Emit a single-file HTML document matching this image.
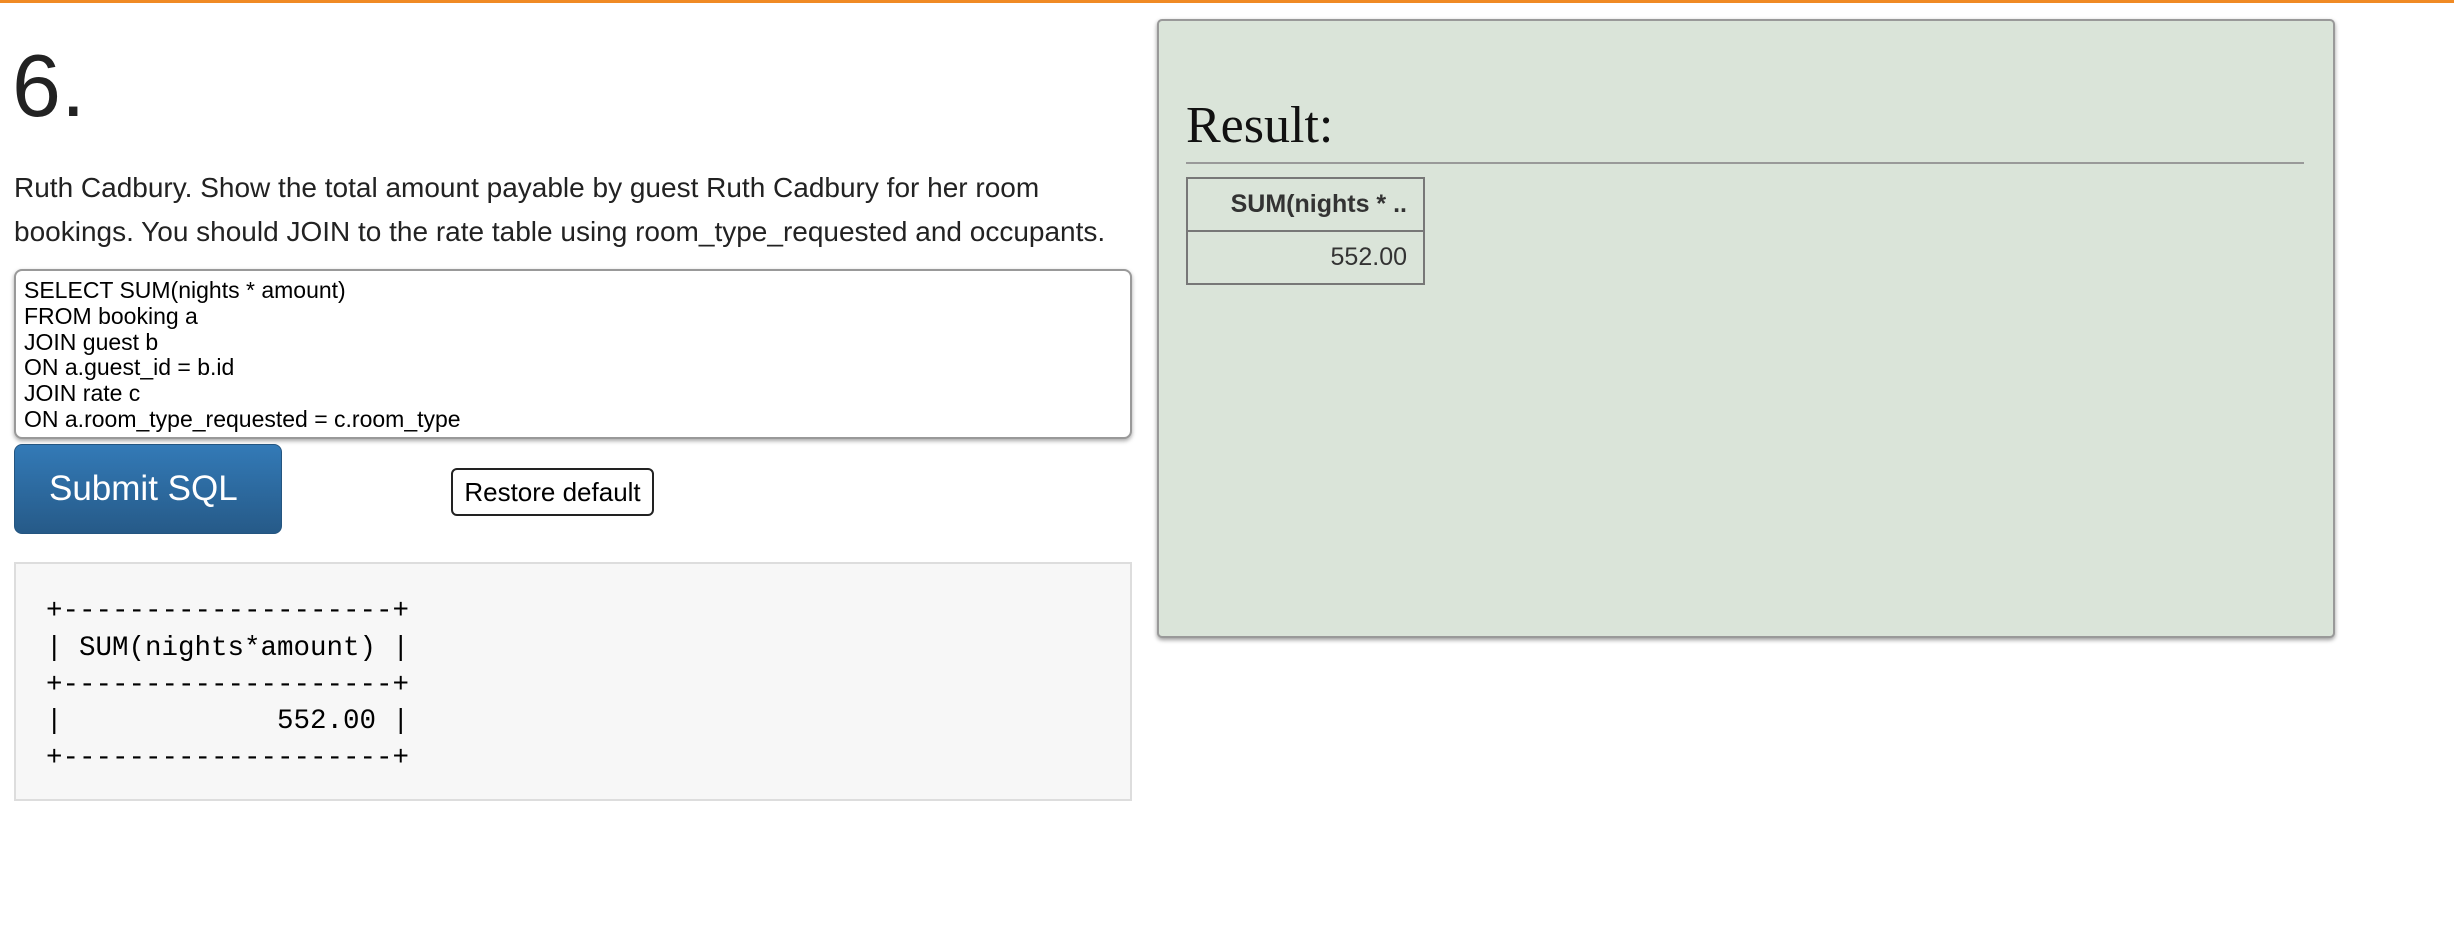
<!DOCTYPE html>
<html><head><style>
body{margin:0;width:2454px;height:934px;background:#fff;position:relative;overflow:hidden;font-family:"Liberation Sans",Arial,sans-serif;color:#222}
.top{position:absolute;left:0;top:0;width:2454px;height:3px;background:#f08a24}
.h{position:absolute;left:12px;top:36px;font-size:88px;line-height:100px;color:#222}
.p{position:absolute;left:14px;top:166px;width:1200px;font-size:28px;line-height:44px;color:#222;white-space:nowrap}
.ta{position:absolute;left:14px;top:269px;width:1118px;height:170px;border:2px solid #999;border-radius:8px;box-shadow:0 2px 4px rgba(0,0,0,.35);box-sizing:border-box;padding:7px 8px;font-size:23px;line-height:25.8px;color:#000;background:#fff;white-space:pre}
.btn{position:absolute;left:14px;top:444px;width:268px;height:90px;border-radius:8px;background:linear-gradient(#337ab7,#265a88);border:1px solid #245580;box-sizing:border-box;color:#fff;font-size:35px;line-height:88px;padding-left:34px}
.rd{position:absolute;left:451px;top:468px;width:203px;height:48px;border:2px solid #222;border-radius:6px;box-sizing:border-box;font-size:26px;line-height:44px;text-align:center;color:#000;background:#fff}
.pre{position:absolute;left:14px;top:562px;width:1118px;height:239px;background:#f7f7f7;border:2px solid #ddd;box-sizing:border-box}
.pre pre{margin:0;position:absolute;left:30px;top:30px;font-family:"Liberation Mono",monospace;font-size:27.5px;line-height:36.8px;color:#000}
.res{position:absolute;left:1157px;top:19px;width:1178px;height:619px;background:#dae4d9;border:2px solid #999;border-radius:5px;box-shadow:0 2px 4px rgba(0,0,0,.4);box-sizing:border-box}
.rt{position:absolute;left:1186px;top:96px;font-family:"Liberation Serif",Georgia,serif;font-size:52px;line-height:60px;color:#111}
.hr{position:absolute;left:1186px;top:162px;width:1118px;height:2px;background:#999}
table{position:absolute;left:1186px;top:177px;border-collapse:collapse;font-size:25px;color:#333}
td,th{border:2px solid #777;height:53px;padding:0 16px 0 20px;text-align:right;width:237px;box-sizing:border-box;white-space:nowrap}
</style></head><body>
<div class="top"></div>
<div class="h">6.</div>
<div class="p">Ruth Cadbury. Show the total amount payable by guest Ruth Cadbury for her room<br>bookings. You should JOIN to the rate table using room_type_requested and occupants.</div>
<div class="ta">SELECT SUM(nights * amount)
FROM booking a
JOIN guest b
ON a.guest_id = b.id
JOIN rate c
ON a.room_type_requested = c.room_type</div>
<div class="btn">Submit SQL</div>
<div class="rd">Restore default</div>
<div class="pre"><pre>+--------------------+
| SUM(nights*amount) |
+--------------------+
|             552.00 |
+--------------------+</pre></div>
<div class="res"></div>
<div class="rt">Result:</div>
<div class="hr"></div>
<table><tr><th>SUM(nights * ..</th></tr><tr><td>552.00</td></tr></table>
</body></html>
